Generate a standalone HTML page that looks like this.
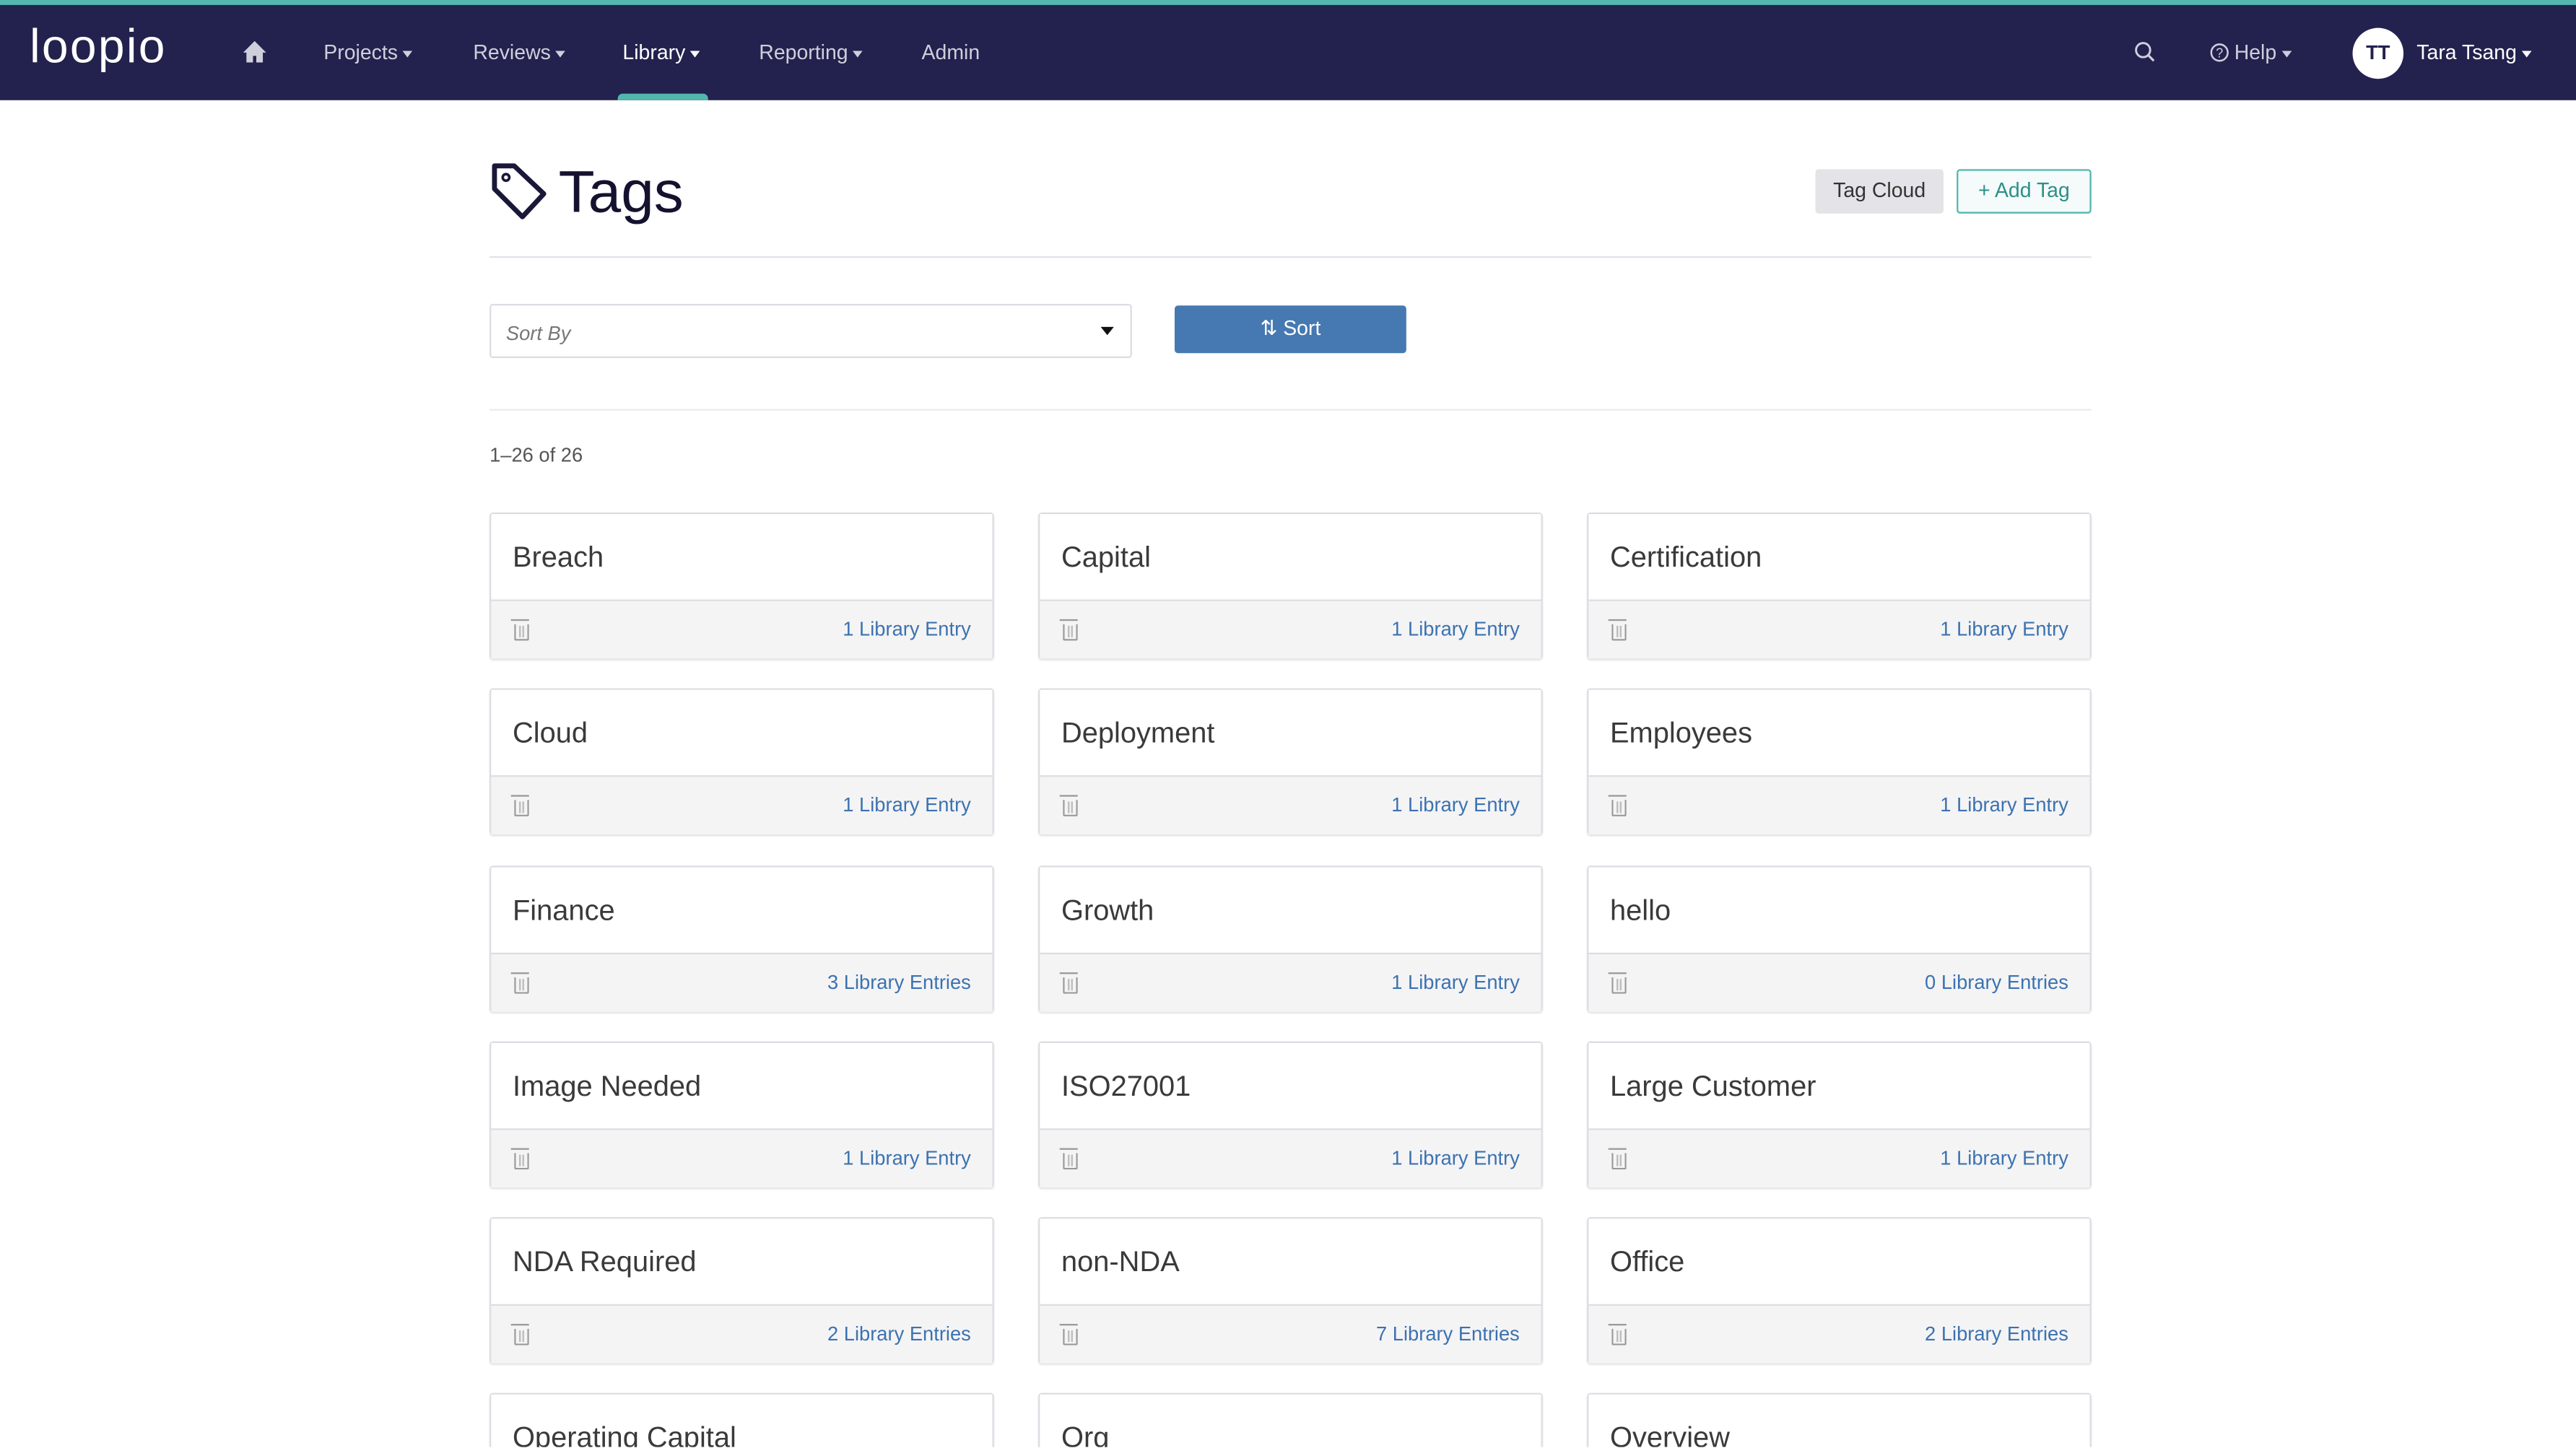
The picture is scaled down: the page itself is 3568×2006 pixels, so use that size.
<!DOCTYPE html>
<html><head><meta charset="utf-8"><style>
html,body{margin:0;padding:0;background:#fff;overflow:hidden;width:3568px;height:2006px}
#w{position:absolute;left:0;top:0;width:1568px;height:881px;transform:scale(2.27551);transform-origin:0 0;font-family:"Liberation Sans",sans-serif;overflow:hidden}
.top{position:absolute;left:0;top:0;width:1568px;height:3px;background:#52b6ae}
.nav{position:absolute;left:0;top:3px;width:1568px;height:58px;background:#23214d;color:#cfcfdc;font-size:12.5px}
.nav span{position:absolute;top:22px}
.car{display:inline-block;border-left:3.5px solid transparent;border-right:3.5px solid transparent;border-top:4px solid currentColor;vertical-align:middle;margin-left:3px}
.abs{position:absolute}
.card{position:absolute;width:305px;height:87px;border:1px solid #dcdce2;border-radius:2px;box-shadow:0 1px 1px #e4e4e8}
.card .h{height:52px;border-bottom:1px solid #dcdce2;font-size:17.5px;color:#3a3a3a;line-height:52px;padding-left:13px;background:#fff}
.card .f{height:35px;background:#f4f4f5;position:relative}
.card .f b{position:absolute;right:13px;top:10px;font-weight:normal;font-size:12px;color:#3c72b0}
.card .f i{position:absolute;left:14px;top:14px;width:7px;height:9px;border:1px solid #999;border-top:none;border-radius:0 0 1px 1px}
.card .f i:before{content:"";position:absolute;left:-3px;top:-3px;width:11px;height:1px;background:#999}
.card .f i:after{content:"";position:absolute;left:2px;top:1px;height:7px;border-left:1px solid #bbb;border-right:1px solid #bbb;width:1px}
</style></head><body><div id="w">
<div class="top"></div>
<div class="nav">
<span style="left:18px;top:10px;font-size:29px;color:#fff;letter-spacing:1px;font-weight:normal">loopio</span>
<svg class="abs" style="left:148px;top:22px" width="14" height="13" viewBox="0 0 14 13"><path d="M7 0L0 7h2v6h4V9h2v4h4V7h2z" fill="#cfcfdc"/></svg>
<span style="left:197px">Projects<i class="car"></i></span>
<span style="left:288px">Reviews<i class="car"></i></span>
<span style="left:379px;color:#fff">Library<i class="car"></i></span>
<span style="left:462px">Reporting<i class="car"></i></span>
<span style="left:561px">Admin</span>
<div class="abs" style="left:376px;top:54px;width:55px;height:4px;background:#52b6ae;border-radius:3px 3px 0 0"></div>
<svg class="abs" style="left:1299px;top:22px" width="13" height="13" viewBox="0 0 13 13"><circle cx="5.5" cy="5.5" r="4.3" fill="none" stroke="#cfcfdc" stroke-width="1.3"/><path d="M8.7 8.7L12 12" stroke="#cfcfdc" stroke-width="1.4"/></svg>
<svg class="abs" style="left:1345px;top:23px" width="12" height="12" viewBox="0 0 12 12"><circle cx="6" cy="6" r="5" fill="none" stroke="#cfcfdc" stroke-width="1.1"/><text x="6" y="9" font-size="8" text-anchor="middle" fill="#cfcfdc" font-family="Liberation Sans">?</text></svg>
<span style="left:1360px">Help<i class="car"></i></span>
<div class="abs" style="left:1432px;top:14px;width:31px;height:31px;border-radius:50%;background:#fff;color:#23214d;font-weight:bold;font-size:12px;text-align:center;line-height:31px">TT</div>
<span style="left:1471px;color:#fff">Tara Tsang<i class="car"></i></span>
</div>
<svg class="abs" style="left:298px;top:99px" width="36" height="36" viewBox="0 0 36 36"><path d="M3 2h12l18 17-13 14L3 16z" fill="none" stroke="#1a1838" stroke-width="3" stroke-linejoin="round"/><circle cx="10" cy="9" r="2" fill="none" stroke="#1a1838" stroke-width="1.6"/></svg>
<div class="abs" style="left:340px;top:96px;font-size:36px;color:#14122e">Tags</div>
<div class="abs" style="left:1105px;top:103px;width:78px;height:27px;background:#e4e4e8;border-radius:2px;font-size:12.5px;color:#333;text-align:center;line-height:27px">Tag Cloud</div>
<div class="abs" style="left:1191px;top:103px;width:80px;height:25px;border:1px solid #52b6ae;border-radius:2px;font-size:12.5px;color:#2e8f88;text-align:center;line-height:25px;background:#f4fbfa">+ Add Tag</div>
<div class="abs" style="left:298px;top:156px;width:975px;height:1px;background:#e2e2ea"></div>
<div class="abs" style="left:298px;top:185px;width:389px;height:31px;border:1px solid #dcdce4;border-radius:2px"><span class="abs" style="left:9px;top:10px;font-size:12px;font-style:italic;color:#777">Sort By</span><span class="abs" style="right:10px;top:13px;border-left:4px solid transparent;border-right:4px solid transparent;border-top:5px solid #111"></span></div>
<div class="abs" style="left:715px;top:186px;width:141px;height:29px;background:#4679b2;border-radius:2px;color:#fff;font-size:12.5px;text-align:center;line-height:29px">&#8645; Sort</div>
<div class="abs" style="left:298px;top:249px;width:975px;height:1px;background:#ececf0"></div>
<div class="abs" style="left:298px;top:270px;font-size:12px;color:#555">1–26 of 26</div>

<div class="card" style="left:298px;top:312px"><div class="h">Breach</div><div class="f"><i></i><b>1 Library Entry</b></div></div>
<div class="card" style="left:632px;top:312px"><div class="h">Capital</div><div class="f"><i></i><b>1 Library Entry</b></div></div>
<div class="card" style="left:966px;top:312px"><div class="h">Certification</div><div class="f"><i></i><b>1 Library Entry</b></div></div>
<div class="card" style="left:298px;top:419px"><div class="h">Cloud</div><div class="f"><i></i><b>1 Library Entry</b></div></div>
<div class="card" style="left:632px;top:419px"><div class="h">Deployment</div><div class="f"><i></i><b>1 Library Entry</b></div></div>
<div class="card" style="left:966px;top:419px"><div class="h">Employees</div><div class="f"><i></i><b>1 Library Entry</b></div></div>
<div class="card" style="left:298px;top:527px"><div class="h">Finance</div><div class="f"><i></i><b>3 Library Entries</b></div></div>
<div class="card" style="left:632px;top:527px"><div class="h">Growth</div><div class="f"><i></i><b>1 Library Entry</b></div></div>
<div class="card" style="left:966px;top:527px"><div class="h">hello</div><div class="f"><i></i><b>0 Library Entries</b></div></div>
<div class="card" style="left:298px;top:634px"><div class="h">Image Needed</div><div class="f"><i></i><b>1 Library Entry</b></div></div>
<div class="card" style="left:632px;top:634px"><div class="h">ISO27001</div><div class="f"><i></i><b>1 Library Entry</b></div></div>
<div class="card" style="left:966px;top:634px"><div class="h">Large Customer</div><div class="f"><i></i><b>1 Library Entry</b></div></div>
<div class="card" style="left:298px;top:741px"><div class="h">NDA Required</div><div class="f"><i></i><b>2 Library Entries</b></div></div>
<div class="card" style="left:632px;top:741px"><div class="h">non-NDA</div><div class="f"><i></i><b>7 Library Entries</b></div></div>
<div class="card" style="left:966px;top:741px"><div class="h">Office</div><div class="f"><i></i><b>2 Library Entries</b></div></div>
<div class="card" style="left:298px;top:848px"><div class="h">Operating Capital</div></div>
<div class="card" style="left:632px;top:848px"><div class="h">Org</div></div>
<div class="card" style="left:966px;top:848px"><div class="h">Overview</div></div>
</div></body></html>
